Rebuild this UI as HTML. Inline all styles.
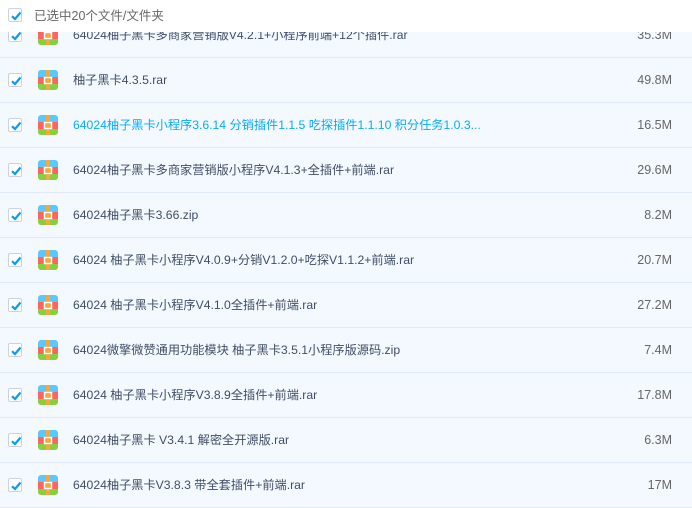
<!DOCTYPE html>
<html><head><meta charset="utf-8"><style>
*{margin:0;padding:0;box-sizing:border-box}
body{width:692px;height:505px;overflow:hidden;background:#f3f9fe;font-family:"Liberation Sans","Noto Sans CJK SC",sans-serif;position:relative}
.hdr{position:absolute;left:0;top:0;width:692px;height:32px;background:#fff;z-index:2;font-size:12.5px;color:#666}
.cb{position:absolute;width:14px;height:14px;border:1px solid #c9d4e0;background:#fff;border-radius:2px}
.cb svg{position:absolute;left:1px;top:1px}
.row{position:absolute;left:0;width:692px;height:45px;border-bottom:1px solid #dfeaf6}
.ic{position:absolute;left:38px;width:20px;height:20px;border-radius:3px;overflow:hidden}
.name{position:absolute;left:73px;font-size:12.2px;line-height:16px;color:#424e67;white-space:nowrap}
.sz{position:absolute;right:20px;font-size:12.5px;line-height:16px;color:#666}
.blue{color:#09aaff}
</style></head><body>
<div class="hdr"><div class="cb" style="left:8px;top:8px"><svg width="12" height="12" viewBox="0 0 12 12"><path d="M2 6.2 L5 9 L10.5 2.5" stroke="#0a9cf5" stroke-width="2.2" fill="none"/></svg></div><span style="position:absolute;left:34px;top:8px;line-height:16px">已选中20个文件/文件夹</span></div>
<div id="rows"></div>
<script>
var d=[["64024柚子黑卡多商家营销版V4.2.1+小程序前端+12个插件.rar","35.3M"],["柚子黑卡4.3.5.rar","49.8M"],["64024柚子黑卡小程序3.6.14 分销插件1.1.5 吃探插件1.1.10 积分任务1.0.3...","16.5M",1],["64024柚子黑卡多商家营销版小程序V4.1.3+全插件+前端.rar","29.6M"],["64024柚子黑卡3.66.zip","8.2M"],["64024 柚子黑卡小程序V4.0.9+分销V1.2.0+吃探V1.1.2+前端.rar","20.7M"],["64024 柚子黑卡小程序V4.1.0全插件+前端.rar","27.2M"],["64024微擎微赞通用功能模块 柚子黑卡3.5.1小程序版源码.zip","7.4M"],["64024 柚子黑卡小程序V3.8.9全插件+前端.rar","17.8M"],["64024柚子黑卡 V3.4.1 解密全开源版.rar","6.3M"],["64024柚子黑卡V3.8.3 带全套插件+前端.rar","17M"]];
var h="";
d.forEach(function(r,i){var c=35+45*i;var t=c-22.5;
h+='<div class="row" style="top:'+t+'px">'+
'<div class="cb" style="left:8px;top:15px"><svg width="12" height="12" viewBox="0 0 12 12"><path d="M2 6.2 L5 9 L10.5 2.5" stroke="#0a9cf5" stroke-width="2.2" fill="none"/></svg></div>'+
'<div class="ic" style="top:12.5px"><svg width="20" height="20"><rect width="20" height="7" fill="#5ac8fa"/><rect y="7" width="20" height="7" fill="#fb6560"/><rect y="14" width="20" height="6" fill="#86cf3d"/><rect x="8" width="4" height="20" fill="#f9a63a"/><rect x="6.5" y="7.5" width="7" height="6" fill="#f9a63a" stroke="#fff" stroke-width="1.5"/></svg></div>'+
'<span class="name'+(r[2]?' blue':'')+'" style="top:14.5px">'+r[0]+'</span><span class="sz" style="top:14.5px">'+r[1]+'</span></div>';});
document.getElementById("rows").innerHTML=h;
</script>
</body></html>
